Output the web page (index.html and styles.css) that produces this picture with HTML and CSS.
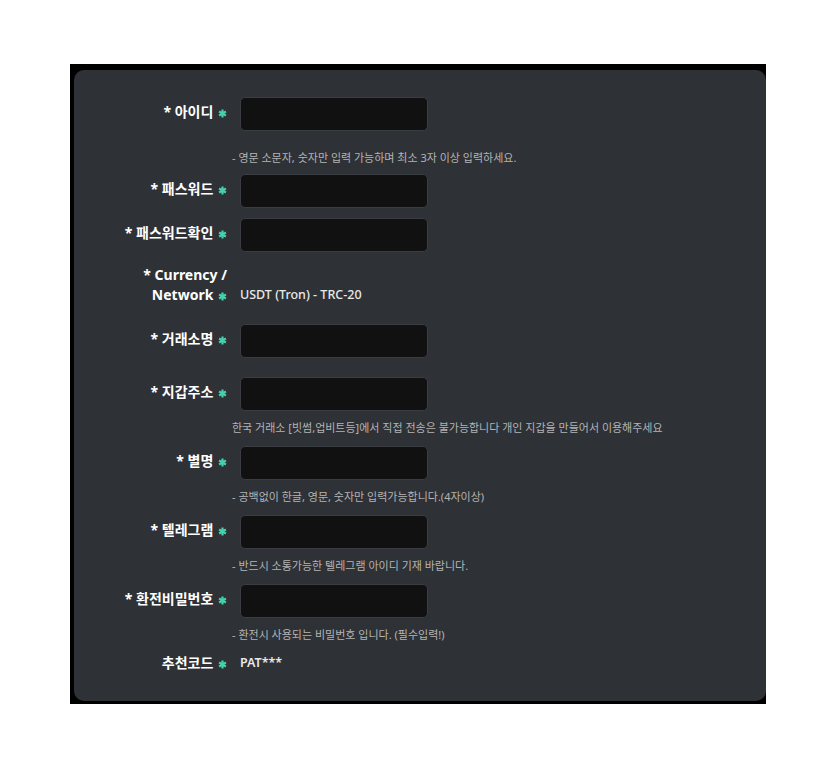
FILE: index.html
```html
<!DOCTYPE html>
<html lang="ko">
<head>
  <meta charset="utf-8">
  <title>회원가입</title>
  <link rel="stylesheet" href="styles.css">
</head>
<body>
  <div class="frame">
    <div class="panel">
      <form class="join-form">
        <div class="row">
          <label class="label">* 아이디 <svg class="req" viewBox="0 0 10 10"><path d="M5 0.6V9.4M1.2 2.8L8.8 7.2M8.8 2.8L1.2 7.2"/></svg></label>
          <input class="field" type="text">
        </div>
        <p class="hint hint-first">- 영문 소문자, 숫자만 입력 가능하며 최소 3자 이상 입력하세요.</p>

        <div class="row row-tight">
          <label class="label">* 패스워드 <svg class="req" viewBox="0 0 10 10"><path d="M5 0.6V9.4M1.2 2.8L8.8 7.2M8.8 2.8L1.2 7.2"/></svg></label>
          <input class="field" type="password">
        </div>

        <div class="row">
          <label class="label">* 패스워드확인 <svg class="req" viewBox="0 0 10 10"><path d="M5 0.6V9.4M1.2 2.8L8.8 7.2M8.8 2.8L1.2 7.2"/></svg></label>
          <input class="field" type="password">
        </div>

        <div class="row row-text row-network">
          <label class="label">* Currency /<br>Network <svg class="req" viewBox="0 0 10 10"><path d="M5 0.6V9.4M1.2 2.8L8.8 7.2M8.8 2.8L1.2 7.2"/></svg></label>
          <span class="value">USDT (Tron) - TRC-20</span>
        </div>

        <div class="row row-wide">
          <label class="label">* 거래소명 <svg class="req" viewBox="0 0 10 10"><path d="M5 0.6V9.4M1.2 2.8L8.8 7.2M8.8 2.8L1.2 7.2"/></svg></label>
          <input class="field" type="text">
        </div>

        <div class="row row-wide">
          <label class="label">* 지갑주소 <svg class="req" viewBox="0 0 10 10"><path d="M5 0.6V9.4M1.2 2.8L8.8 7.2M8.8 2.8L1.2 7.2"/></svg></label>
          <input class="field" type="text">
        </div>
        <p class="hint">한국 거래소 [빗썸,업비트등]에서 직접 전송은 불가능합니다 개인 지갑을 만들어서 이용해주세요</p>

        <div class="row">
          <label class="label">* 별명 <svg class="req" viewBox="0 0 10 10"><path d="M5 0.6V9.4M1.2 2.8L8.8 7.2M8.8 2.8L1.2 7.2"/></svg></label>
          <input class="field" type="text">
        </div>
        <p class="hint">- 공백없이 한글, 영문, 숫자만 입력가능합니다.(4자이상)</p>

        <div class="row">
          <label class="label">* 텔레그램 <svg class="req" viewBox="0 0 10 10"><path d="M5 0.6V9.4M1.2 2.8L8.8 7.2M8.8 2.8L1.2 7.2"/></svg></label>
          <input class="field" type="text">
        </div>
        <p class="hint">- 반드시 소통가능한 텔레그램 아이디 기재 바랍니다.</p>

        <div class="row">
          <label class="label">* 환전비밀번호 <svg class="req" viewBox="0 0 10 10"><path d="M5 0.6V9.4M1.2 2.8L8.8 7.2M8.8 2.8L1.2 7.2"/></svg></label>
          <input class="field" type="password">
        </div>
        <p class="hint">- 환전시 사용되는 비밀번호 입니다. (필수입력!)</p>

        <div class="row row-text">
          <label class="label">추천코드 <svg class="req" viewBox="0 0 10 10"><path d="M5 0.6V9.4M1.2 2.8L8.8 7.2M8.8 2.8L1.2 7.2"/></svg></label>
          <span class="value value-code">PAT***</span>
        </div>
      </form>
    </div>
  </div>
</body>
</html>
```

FILE: styles.css
```css
body {
  margin: 0;
  background-color: #fff;
  font-family: "Noto Sans", "Noto Sans CJK KR", sans-serif;
}

.frame {
  width: 696px;
  height: 640px;
  margin: 64px 0 0 70px;
  padding: 6px 0 3px 4px;
  box-sizing: border-box;
  background-color: #000;
}

.panel {
  height: 100%;
  background-color: #2e3136;
  border-radius: 10px;
  padding-top: 27px;
  box-sizing: border-box;
}

.join-form {
  display: flex;
  flex-direction: column;
}

.row {
  display: grid;
  grid-template-columns: 153px 188px;
  column-gap: 13px;
  align-items: center;
  margin-top: 10px;
}

.row:first-child {
  margin-top: 0;
}

.row-tight {
  margin-top: 8px;
}

.row-wide {
  margin-top: 19px;
}

.row-text {
  align-items: end;
}

.row-network {
  margin-top: 13px;
}

.label {
  text-align: right;
  color: #fff;
  font-size: 14px;
  font-weight: 700;
  line-height: 20px;
  margin-bottom: 4px;
}

.row-text .label {
  margin-bottom: 0;
}

.req {
  width: 9px;
  height: 9px;
  margin-left: 1px;
  vertical-align: -1px;
  stroke: #45d1ad;
  stroke-width: 2.4;
  fill: none;
}

.field {
  height: 34px;
  box-sizing: border-box;
  background-color: #111;
  border: 1px solid #3a3d42;
  border-radius: 5px;
  color: #eee;
  padding: 0 10px;
}

.value {
  color: #e9e9e9;
  font-size: 12.5px;
  font-weight: 500;
  line-height: 20px;
}

.value-code {
  font-weight: 600;
}

.hint {
  margin: 8px 0 0 158px;
  color: #b4b4b4;
  font-size: 11px;
  line-height: 17px;
}

.hint-first {
  margin-top: 18px;
}
```
